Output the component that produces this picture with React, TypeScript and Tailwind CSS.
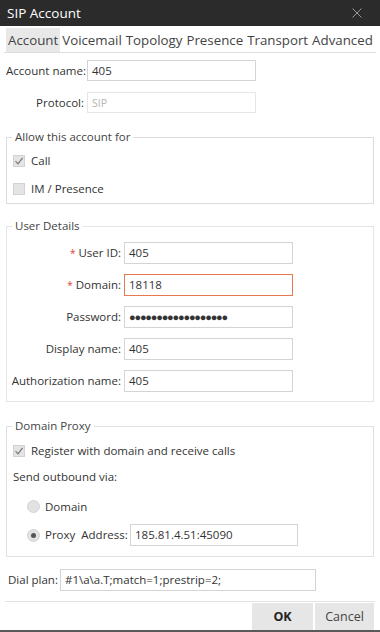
import React from "react";

function Check({ checked }: { checked?: boolean }) {
  return (
    <span className="w-[12px] h-[12px] bg-[#e4e4e4] border border-[#d2d2d2] flex items-center justify-center shrink-0">
      {checked && (
        <svg width="10" height="10" viewBox="0 0 10 10">
          <path d="M1.5 5.2 L4 7.8 L8.6 1.8" fill="none" stroke="#777" strokeWidth="1.2" />
        </svg>
      )}
    </span>
  );
}

function Radio({ checked }: { checked?: boolean }) {
  return (
    <span className="w-[13px] h-[13px] rounded-full bg-[#e2e2e2] border border-[#d4d4d4] flex items-center justify-center shrink-0">
      {checked && <span className="w-[5px] h-[5px] rounded-full bg-[#555]" />}
    </span>
  );
}

function Field({ label, value, required, focus, password }: { label: string; value: string; required?: boolean; focus?: boolean; password?: boolean }) {
  return (
    <div className="h-[32px] flex items-center">
      <div className="w-[117px] pr-[3px] text-right whitespace-nowrap">
        {required && <span className="text-[#d9403a] text-[10px] mr-[3px] align-top">*</span>}
        {label}
      </div>
      <div
        className={
          focus
            ? "w-[169px] h-[22px] border border-[#e8794f] px-[4px] flex items-center"
            : "w-[169px] h-[22px] border border-[#d4d4d4] px-[4px] flex items-center"
        }
      >
        {password ? <span className="tracking-[-1.2px] text-[11px]">{value}</span> : value}
      </div>
    </div>
  );
}

export default function App() {
  const tabs = ["Account", "Voicemail", "Topology", "Presence", "Transport", "Advanced"];
  return (
    <div className="w-[380px] h-[632px] bg-white flex flex-col font-['Open_Sans',sans-serif] text-[11.5px] leading-[16px] text-[#333] border-b-2 border-[#5a5a5a] overflow-hidden">
      {/* title bar */}
      <div className="h-[26px] bg-[#2b2b2b] flex items-center justify-between pl-[7px] pr-[18px] shrink-0">
        <span className="text-white text-[13.5px]">SIP Account</span>
        <svg width="10" height="10" viewBox="0 0 10 10">
          <path d="M0.5 0.5 L9.5 9.5 M9.5 0.5 L0.5 9.5" stroke="#9a9a9a" strokeWidth="1" />
        </svg>
      </div>

      {/* tabs */}
      <div className="mt-[2px] mx-[4px] h-[25px] border-b border-[#dedede] flex items-stretch text-[13.3px] text-[#444] shrink-0 whitespace-nowrap">
        {tabs.map((t, i) => (
          <div key={t} className={i === 0 ? "ml-[2px] px-[2px] bg-[#e8e8e8] flex items-center" : "px-[2px] flex items-center"}>
            {t}
          </div>
        ))}
      </div>

      {/* account */}
      <div className="mt-[7px] flex items-center pl-[6px]">
        <div className="w-[81px] pr-[3px] text-right whitespace-nowrap">Account name:</div>
        <div className="w-[169px] h-[21px] border border-[#d4d4d4] px-[4px] flex items-center">405</div>
      </div>
      <div className="mt-[11px] flex items-center pl-[6px]">
        <div className="w-[81px] pr-[3px] text-right">Protocol:</div>
        <div className="w-[169px] h-[21px] border border-[#e6e6e6] px-[4px] flex items-center text-[#b5b5b5] text-[10.5px]">SIP</div>
      </div>

      {/* allow */}
      <fieldset className="mt-[16px] mx-[6px] border border-[#dcdcdc] pt-[2px]">
        <legend className="ml-[5px] px-[3px] leading-[16px] text-[#444]">Allow this account for</legend>
        <div className="h-[28px] flex items-center gap-[6px] pl-[6px]">
          <Check checked />
          <span>Call</span>
        </div>
        <div className="h-[28px] flex items-center gap-[6px] pl-[6px]">
          <Check />
          <span>IM / Presence</span>
        </div>
      </fieldset>

      {/* user details */}
      <fieldset className="mt-[14px] mx-[6px] border border-[#e4e4e4] pt-[3px] pb-[4px]">
        <legend className="ml-[5px] px-[3px] leading-[16px] text-[#444]">User Details</legend>
        <Field label="User ID:" value="405" required />
        <Field label="Domain:" value="18118" required focus />
        <Field label="Password:" value="●●●●●●●●●●●●●●●●●●" password />
        <Field label="Display name:" value="405" />
        <Field label="Authorization name:" value="405" />
      </fieldset>

      {/* domain proxy */}
      <fieldset className="mt-[16px] mx-[6px] border border-[#e0e0e0] pt-[3px] pb-[10px]">
        <legend className="ml-[5px] px-[3px] leading-[16px] text-[#444]">Domain Proxy</legend>
        <div className="h-[28px] flex items-center gap-[6px] pl-[6px]">
          <Check checked />
          <span>Register with domain and receive calls</span>
        </div>
        <div className="h-[24px] flex items-center pl-[6px]">Send outbound via:</div>
        <div className="h-[35px] flex items-center gap-[5px] pl-[20px]">
          <Radio />
          <span>Domain</span>
        </div>
        <div className="h-[22px] flex items-center pl-[20px]">
          <Radio checked />
          <span className="ml-[5px] w-[85px] whitespace-pre">Proxy  Address:</span>
          <div className="w-[168px] h-[22px] border border-[#d4d4d4] px-[4px] flex items-center">185.81.4.51:45090</div>
        </div>
      </fieldset>

      {/* dial plan */}
      <div className="mt-[12px] flex items-center pl-[8px]">
        <div className="w-[52px] whitespace-nowrap">Dial plan:</div>
        <div className="w-[256px] h-[22px] border border-[#d4d4d4] px-[4px] flex items-center">#1\a\a.T;match=1;prestrip=2;</div>
      </div>

      <div className="mt-[10px] mx-[5px] border-t border-[#e2e2e2]" />

      {/* buttons */}
      <div className="mt-[1px] flex justify-end gap-[2px] pr-[6px]">
        <button className="w-[61px] h-[27px] bg-[#e6e6e6] font-bold text-[12.5px] text-[#222]">OK</button>
        <button className="w-[59px] h-[27px] bg-[#e6e6e6] text-[12.5px] text-[#444]">Cancel</button>
      </div>
    </div>
  );
}
